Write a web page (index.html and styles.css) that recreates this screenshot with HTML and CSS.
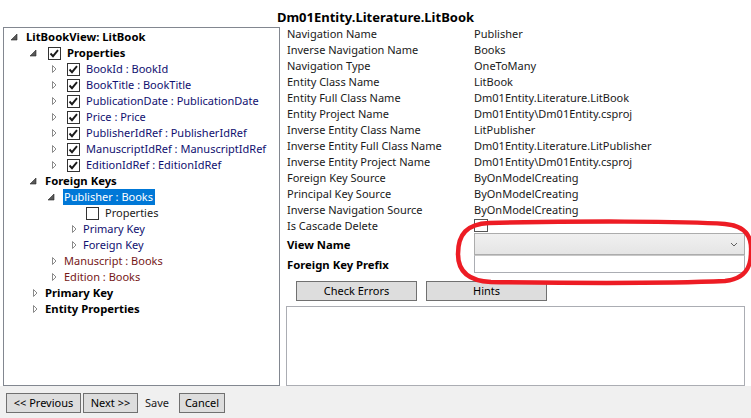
FILE: index.html
```html
<!DOCTYPE html>
<html>
<head>
<meta charset="utf-8">
<link rel="stylesheet" href="styles.css">
</head>
<body>
<div class="window">
  <div class="top">
    <div class="title">Dm01Entity.Literature.LitBook</div>
    <div class="content">
      <div class="tree">
        <div class="node l0 bold"><span class="tog"><svg viewBox="0 0 19 16" width="19" height="16"><polygon class="exp" points="11,5 11,11 5,11"/></svg></span><span class="txt">LitBookView: LitBook</span></div>
        <div class="node l1 bold"><span class="tog"><svg viewBox="0 0 19 16" width="19" height="16"><polygon class="exp" points="11,5 11,11 5,11"/></svg></span><span class="cb"><svg viewBox="0 0 13 13" width="13" height="13"><polyline points="2.5,6.5 5,9.2 10,3.2"/></svg></span><span class="txt">Properties</span></div>
        <div class="node l2 navy"><span class="tog"><svg viewBox="0 0 19 16" width="19" height="16"><polygon class="col" points="8.5,4.5 8.5,11.5 12,8"/></svg></span><span class="cb"><svg viewBox="0 0 13 13" width="13" height="13"><polyline points="2.5,6.5 5,9.2 10,3.2"/></svg></span><span class="txt">BookId : BookId</span></div>
        <div class="node l2 navy"><span class="tog"><svg viewBox="0 0 19 16" width="19" height="16"><polygon class="col" points="8.5,4.5 8.5,11.5 12,8"/></svg></span><span class="cb"><svg viewBox="0 0 13 13" width="13" height="13"><polyline points="2.5,6.5 5,9.2 10,3.2"/></svg></span><span class="txt">BookTitle : BookTitle</span></div>
        <div class="node l2 navy"><span class="tog"><svg viewBox="0 0 19 16" width="19" height="16"><polygon class="col" points="8.5,4.5 8.5,11.5 12,8"/></svg></span><span class="cb"><svg viewBox="0 0 13 13" width="13" height="13"><polyline points="2.5,6.5 5,9.2 10,3.2"/></svg></span><span class="txt">PublicationDate : PublicationDate</span></div>
        <div class="node l2 navy"><span class="tog"><svg viewBox="0 0 19 16" width="19" height="16"><polygon class="col" points="8.5,4.5 8.5,11.5 12,8"/></svg></span><span class="cb"><svg viewBox="0 0 13 13" width="13" height="13"><polyline points="2.5,6.5 5,9.2 10,3.2"/></svg></span><span class="txt">Price : Price</span></div>
        <div class="node l2 navy"><span class="tog"><svg viewBox="0 0 19 16" width="19" height="16"><polygon class="col" points="8.5,4.5 8.5,11.5 12,8"/></svg></span><span class="cb"><svg viewBox="0 0 13 13" width="13" height="13"><polyline points="2.5,6.5 5,9.2 10,3.2"/></svg></span><span class="txt">PublisherIdRef : PublisherIdRef</span></div>
        <div class="node l2 navy"><span class="tog"><svg viewBox="0 0 19 16" width="19" height="16"><polygon class="col" points="8.5,4.5 8.5,11.5 12,8"/></svg></span><span class="cb"><svg viewBox="0 0 13 13" width="13" height="13"><polyline points="2.5,6.5 5,9.2 10,3.2"/></svg></span><span class="txt">ManuscriptIdRef : ManuscriptIdRef</span></div>
        <div class="node l2 navy"><span class="tog"><svg viewBox="0 0 19 16" width="19" height="16"><polygon class="col" points="8.5,4.5 8.5,11.5 12,8"/></svg></span><span class="cb"><svg viewBox="0 0 13 13" width="13" height="13"><polyline points="2.5,6.5 5,9.2 10,3.2"/></svg></span><span class="txt">EditionIdRef : EditionIdRef</span></div>
        <div class="node l1 bold"><span class="tog"><svg viewBox="0 0 19 16" width="19" height="16"><polygon class="exp" points="11,5 11,11 5,11"/></svg></span><span class="txt">Foreign Keys</span></div>
        <div class="node l2"><span class="tog"><svg viewBox="0 0 19 16" width="19" height="16"><polygon class="exp" points="10,5 10,11 4,11"/></svg></span><span class="txt selected">Publisher : Books</span></div>
        <div class="node l3"><span class="tog"></span><span class="cb"></span><span class="txt">Properties</span></div>
        <div class="node l3 navy"><span class="tog"><svg viewBox="0 0 19 16" width="19" height="16"><polygon class="col" points="9.5,4.5 9.5,11.5 13,8"/></svg></span><span class="txt">Primary Key</span></div>
        <div class="node l3 navy"><span class="tog"><svg viewBox="0 0 19 16" width="19" height="16"><polygon class="col" points="9.5,4.5 9.5,11.5 13,8"/></svg></span><span class="txt">Foreign Key</span></div>
        <div class="node l2 maroon"><span class="tog"><svg viewBox="0 0 19 16" width="19" height="16"><polygon class="col" points="8.5,4.5 8.5,11.5 12,8"/></svg></span><span class="txt">Manuscript : Books</span></div>
        <div class="node l2 maroon"><span class="tog"><svg viewBox="0 0 19 16" width="19" height="16"><polygon class="col" points="8.5,4.5 8.5,11.5 12,8"/></svg></span><span class="txt">Edition : Books</span></div>
        <div class="node l1 bold"><span class="tog"><svg viewBox="0 0 19 16" width="19" height="16"><polygon class="col" points="8.5,4.5 8.5,11.5 12,8"/></svg></span><span class="txt">Primary Key</span></div>
        <div class="node l1 bold"><span class="tog"><svg viewBox="0 0 19 16" width="19" height="16"><polygon class="col" points="8.5,4.5 8.5,11.5 12,8"/></svg></span><span class="txt">Entity Properties</span></div>
      </div>
      <div class="details">
        <div class="props">
          <div>Navigation Name</div><div>Publisher</div>
          <div>Inverse Navigation Name</div><div>Books</div>
          <div>Navigation Type</div><div>OneToMany</div>
          <div>Entity Class Name</div><div>LitBook</div>
          <div>Entity Full Class Name</div><div>Dm01Entity.Literature.LitBook</div>
          <div>Entity Project Name</div><div>Dm01Entity\Dm01Entity.csproj</div>
          <div>Inverse Entity Class Name</div><div>LitPublisher</div>
          <div>Inverse Entity Full Class Name</div><div>Dm01Entity.Literature.LitPublisher</div>
          <div>Inverse Entity Project Name</div><div>Dm01Entity\Dm01Entity.csproj</div>
          <div>Foreign Key Source</div><div>ByOnModelCreating</div>
          <div>Principal Key Source</div><div>ByOnModelCreating</div>
          <div>Inverse Navigation Source</div><div>ByOnModelCreating</div>
          <div>Is Cascade Delete</div><div><span class="plain-cb"></span></div>
        </div>
        <div class="edit">
          <div class="edit-label">View Name</div>
          <div class="combo"><svg viewBox="0 0 8 5" width="8" height="5"><polyline points="1,1 4,4 7,1"/></svg></div>
          <div class="edit-label">Foreign Key Prefix</div>
          <div class="textbox"></div>
        </div>
        <div class="actions">
          <button class="btn wide">Check Errors</button>
          <button class="btn wide">Hints</button>
        </div>
        <div class="output"></div>
      </div>
    </div>
    <svg class="annotation" viewBox="0 0 300 66" width="300" height="66"><path d="M34,3 C120,1 230,1 270,4 C292,6 297,18 296,32 C296,48 290,59 270,61 C200,64 110,63 36,62 C14,61 3,52 3,34 C3,14 12,4 34,3 Z"/></svg>
  </div>
  <div class="footer">
    <button class="btn prev">&lt;&lt; Previous</button>
    <button class="btn next">Next &gt;&gt;</button>
    <span class="save">Save</span>
    <button class="btn cancel">Cancel</button>
  </div>
</div>
</body>
</html>
```

FILE: styles.css
```css
* { box-sizing: border-box; }
html, body { margin: 0; padding: 0; }
body {
  width: 751px;
  height: 418px;
  overflow: hidden;
  font-family: "Noto Sans", "Open Sans", sans-serif;
  font-size: 11px;
  color: #1a1a1a;
  background: #f0f0f0;
}
.window { width: 751px; height: 418px; }
.top {
  position: relative;
  height: 386px;
  background: #ffffff;
}
.title {
  height: 27px;
  padding-top: 8px;
  line-height: 18px;
  text-align: center;
  font-weight: bold;
  font-size: 13px;
  color: #000;
}
.content { display: flex; }
.tree {
  margin-left: 3px;
  width: 277px;
  height: 359px;
  border: 1px solid #828790;
  padding-top: 1px;
  overflow: hidden;
}
.node {
  display: flex;
  align-items: center;
  height: 16px;
  white-space: nowrap;
}
.l0 { padding-left: 2px; }
.l1 { padding-left: 21px; }
.l2 { padding-left: 40px; }
.l3 { padding-left: 59px; }
.tog { width: 19px; height: 16px; flex: none; display: block; }
.tog svg { display: block; }
.exp { fill: #595959; stroke: #262626; stroke-width: 0.6; }
.col { fill: #fff; stroke: #8a8a8a; stroke-width: 1; }
.cb {
  flex: none;
  width: 13px;
  height: 13px;
  margin-left: 4px;
  margin-right: 5px;
  border: 1px solid #333;
  background: #fff;
  position: relative;
}
.cb svg { position: absolute; left: -1px; top: -1px; }
.cb polyline { fill: none; stroke: #1a1a1a; stroke-width: 1.9; }
.txt { padding: 0 2px 0 1px; line-height: 16px; }
.bold .txt { font-weight: bold; color: #000; font-size: 11.3px; }
.navy .txt { color: #101070; }
.maroon .txt { color: #761818; }
.selected { background: #0078d7; color: #fff; }
.details {
  margin-left: 6px;
  width: 459px;
  display: flex;
  flex-direction: column;
}
.props {
  display: grid;
  grid-template-columns: 188px 1fr;
  grid-auto-rows: 16px;
  line-height: 16px;
  margin-top: -1px;
}
.props > div { padding-left: 1px; white-space: nowrap; }
.props > div:nth-child(even) { padding-left: 0; }
.plain-cb {
  display: block;
  width: 14px;
  height: 13px;
  margin-top: 1px;
  border: 1px solid #555;
  background: #fff;
}
.edit {
  display: grid;
  grid-template-columns: 188px 1fr;
  grid-template-rows: 22px 18px;
  align-items: center;
  margin-top: -1px;
}
.edit-label { font-weight: bold; color: #000; padding-left: 1px; font-size: 11.3px; }
.combo {
  height: 22px;
  border: 1px solid #acacac;
  background: linear-gradient(#f0f0f0, #e5e5e5);
  display: flex;
  align-items: center;
  justify-content: flex-end;
  padding-right: 6px;
}
.combo polyline { fill: none; stroke: #606060; stroke-width: 1; }
.textbox {
  height: 18px;
  border: 1px solid #abadb3;
  border-top-color: #c8c8c8;
  background: #fff;
}
.actions {
  display: flex;
  gap: 9px;
  margin-top: 8px;
  padding-left: 10px;
}
.btn {
  font-family: inherit;
  font-size: 11px;
  color: #000;
  background: #dddddd;
  border: 1px solid #707070;
  height: 20px;
  padding: 0;
  line-height: 18px;
  margin: 0;
}
.wide { width: 121px; }
.output {
  margin-top: 5px;
  height: 80px;
  border: 1px solid #abadb3;
  background: #fff;
}
.annotation {
  position: absolute;
  left: 455px;
  top: 220px;
  overflow: visible;
}
.annotation path { fill: none; stroke: #ed1c24; stroke-width: 4.5; }
.footer {
  height: 32px;
  padding: 7px 0 0 6px;
  display: flex;
  align-items: flex-start;
}
.prev { width: 75px; }
.next { width: 55px; margin-left: 2px; }
.save { width: 41px; text-align: center; line-height: 20px; padding-right: 3px; }
.cancel { width: 46px; }
```
